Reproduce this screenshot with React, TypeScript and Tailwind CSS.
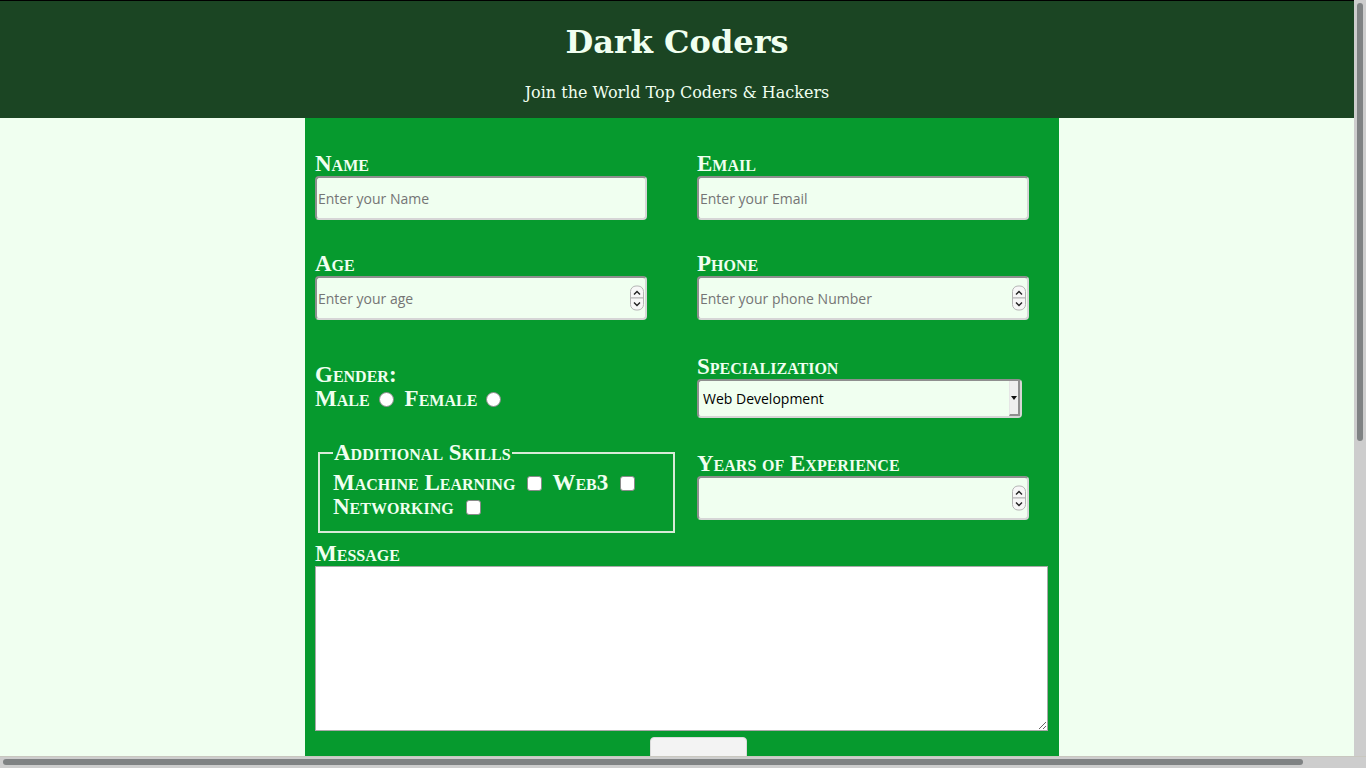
import React from 'react';

const serif = "font-['Liberation_Serif','Times_New_Roman',serif]";
const caps = `font-bold [font-variant:small-caps] text-[23px] leading-[24px] text-[#f0fff0] ${serif}`;
const label = `block ${caps}`;
const sans = "font-['Open_Sans','Noto_Sans',sans-serif]";
const field = `h-[44px] w-[332px] rounded-[4px] border-2 border-t-[#8f8f8f] border-l-[#8f8f8f] border-b-[#d6d6d6] border-r-[#d6d6d6] bg-[#f0fff0] pl-[1px] text-[14px] text-black placeholder:text-[#757575] outline-none ${sans}`;

const Spinner = () => (
    <div className="pointer-events-none absolute right-[3px] top-1/2 flex -translate-y-1/2 flex-col">
        <span className="flex h-[13px] w-[14px] items-center justify-center rounded-t-[6px] border border-[#b5b5b5] bg-[#f7f7f7]">
            <svg width="8" height="6" viewBox="0 0 8 6"><path d="M1 5 L4 2 L7 5" fill="none" stroke="#222" strokeWidth="1.4" /></svg>
        </span>
        <span className="-mt-px flex h-[13px] w-[14px] items-center justify-center rounded-b-[6px] border border-[#b5b5b5] bg-[#f7f7f7]">
            <svg width="8" height="6" viewBox="0 0 8 6"><path d="M1 1 L4 4 L7 1" fill="none" stroke="#222" strokeWidth="1.4" /></svg>
        </span>
    </div>
);

const NumberField = ({ placeholder }: { placeholder?: string }) => (
    <div className="relative w-[332px]">
        <input
            type="number"
            placeholder={placeholder}
            className={`${field} [appearance:textfield] [&::-webkit-inner-spin-button]:appearance-none [&::-webkit-outer-spin-button]:appearance-none`}
        />
        <Spinner />
    </div>
);

const Box = () => (
    <input type="checkbox" className="ml-[12px] mr-[10px] h-[15px] w-[15px] appearance-none rounded-[3px] border border-[#8a8a8a] bg-white" />
);

const Radio = ({ name }: { name: string }) => (
    <input type="radio" name={name} className="ml-[9px] mr-[11px] h-[15px] w-[15px] appearance-none rounded-full border border-[#8a8a8a] bg-white" />
);

// the window's scrollbars, as seen in the screenshot
const Scrollbars = () => (
    <>
        <div className="fixed right-0 top-0 h-[756px] w-[12px] bg-[#cdcdcd] pl-[3px] pt-[3px]">
            <div className="h-[438px] w-[6px] rounded-full bg-[#7f8283]" />
        </div>
        <div className="fixed bottom-0 left-0 h-[12px] w-[1366px] border-t border-[#c9c7bf] bg-[#cdcdcd] pl-[3px] pt-[2px]">
            <div className="h-[6px] w-[1300px] rounded-full bg-[#7f8283]" />
        </div>
    </>
);

export default function App() {
    return (
        <div className="min-h-[1300px] w-[1354px] bg-[#f0fff0]">
            <header className="h-[118px] border-t border-black bg-[#1b4523] pt-[21px] text-center text-[#f0fff0]">
                <h1 className="font-['DejaVu_Serif',serif] text-[32px] font-bold leading-[40px]">Dark Coders</h1>
                <p className="mt-[19px] font-['DejaVu_Serif',serif] text-[16px] leading-[24px]">Join the World Top Coders &amp; Hackers</p>
            </header>

            <div className="flex justify-center">
                <form className="ml-[10px] w-[754px] bg-[#069a2e] pl-[10px] pt-[34px] pb-[520px]">
                    <div className="grid grid-cols-[382px_362px]">
                        <div>
                            <label className={label}>Name</label>
                            <input type="text" placeholder="Enter your Name" className={field} />
                        </div>
                        <div>
                            <label className={label}>Email</label>
                            <input type="email" placeholder="Enter your Email" className={field} />
                        </div>
                    </div>

                    <div className="mt-[32px] grid grid-cols-[382px_362px]">
                        <div>
                            <label className={label}>Age</label>
                            <NumberField placeholder="Enter your age" />
                        </div>
                        <div>
                            <label className={label}>Phone</label>
                            <NumberField placeholder="Enter your phone Number" />
                        </div>
                    </div>

                    <div className="grid grid-cols-[382px_362px] items-start">
                        <div className={`mt-[43px] ${caps}`}>
                            <div>Gender:</div>
                            <div className="flex items-center">
                                <span>Male</span>
                                <Radio name="gender" />
                                <span>Female</span>
                                <Radio name="gender" />
                            </div>
                        </div>
                        <div className="mt-[35px]">
                            <label className={label}>Specialization</label>
                            <div className="relative w-[325px]">
                                <select className={`h-[39px] w-[325px] appearance-none rounded-[4px] border-2 border-t-[#8f8f8f] border-l-[#8f8f8f] border-b-[#d6d6d6] border-r-[#d6d6d6] bg-[#f0fff0] pl-[4px] text-[14px] text-black outline-none ${sans}`}>
                                    <option>Web Development</option>
                                    <option>Data Science</option>
                                    <option>Cyber Security</option>
                                </select>
                                <span className="pointer-events-none absolute right-[2px] top-[2px] flex h-[35px] w-[11px] items-center justify-center border-l border-r-2 border-b-2 border-l-[#e6e6e6] border-r-[#8f8f8f] border-b-[#8f8f8f] bg-[#efefef]">
                                    <svg width="6" height="4" viewBox="0 0 6 4"><path d="M0 0 H6 L3 4 Z" fill="#111" /></svg>
                                </span>
                            </div>
                        </div>
                    </div>

                    <div className="grid grid-cols-[382px_362px] items-start">
                        <fieldset className={`ml-[3px] mt-[23px] w-[357px] border-2 border-[#d8ead8] pl-[13px] pb-[12px] pt-[6px] ${caps}`}>
                            <legend className="px-px">Additional Skills</legend>
                            <div className="flex items-center">
                                <span>Machine Learning</span>
                                <Box />
                                <span>Web3</span>
                                <Box />
                            </div>
                            <div className="flex items-center">
                                <span>Networking</span>
                                <Box />
                            </div>
                        </fieldset>
                        <div className="mt-[34px]">
                            <label className={label}>Years of Experience</label>
                            <NumberField />
                        </div>
                    </div>

                    <div className="mt-[9px]">
                        <label className={label}>Message</label>
                        <textarea className="block h-[165px] w-[733px] border border-[#a9a9a9] bg-white" />
                    </div>

                    <div className="ml-[335px] mt-[6px]">
                        <button type="submit" className={`h-[50px] w-[97px] rounded-[4px] border border-[#dadada] bg-[#f3f3f3] text-[15px] ${sans}`}>Submit</button>
                    </div>
                </form>
            </div>

            <Scrollbars />
        </div>
    );
}
